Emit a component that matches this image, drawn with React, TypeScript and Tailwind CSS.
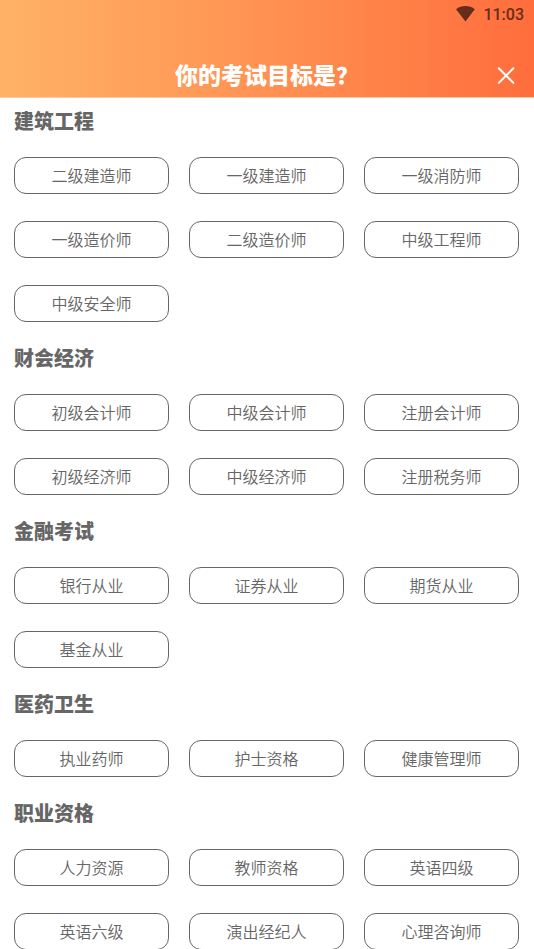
import { useState } from "react";

interface ExamSection {
  title: string;
  exams: string[];
}

const sections: ExamSection[] = [
  {
    title: "建筑工程",
    exams: [
      "二级建造师",
      "一级建造师",
      "一级消防师",
      "一级造价师",
      "二级造价师",
      "中级工程师",
      "中级安全师",
    ],
  },
  {
    title: "财会经济",
    exams: [
      "初级会计师",
      "中级会计师",
      "注册会计师",
      "初级经济师",
      "中级经济师",
      "注册税务师",
    ],
  },
  {
    title: "金融考试",
    exams: ["银行从业", "证券从业", "期货从业", "基金从业"],
  },
  {
    title: "医药卫生",
    exams: ["执业药师", "护士资格", "健康管理师"],
  },
  {
    title: "职业资格",
    exams: [
      "人力资源",
      "教师资格",
      "英语四级",
      "英语六级",
      "演出经纪人",
      "心理咨询师",
    ],
  },
];

const StatusBar = () => (
  <div className="flex h-7 items-center justify-end gap-2 pr-2.5 text-[#652d1a]">
    <svg width="20" height="18" viewBox="0 0 20 18" fill="currentColor">
      <path d="M10.500 16.600 1 4.200C3.700 2 6.900.9 10.500.9s6.600 1.100 9.300 3.300z" />
    </svg>
    <span className="pt-px font-[Roboto] text-base font-medium">11:03</span>
  </div>
);

const App = () => {
  const [selected, setSelected] = useState<string | null>(null);

  return (
    <div className="h-screen overflow-hidden bg-white font-['Noto_Sans_CJK_SC',sans-serif] text-[#666]">
      <header className="border-b border-[#ffc8a6] bg-linear-to-r from-[#ffb266] to-[#ff6d3d]">
        <StatusBar />
        <div className="grid h-[69px] grid-cols-[1fr_auto_1fr] items-end px-3.5 pb-2">
          <h1 className="col-start-2 pb-px text-[23px] leading-7 font-black text-white">
            你的考试目标是？
          </h1>
          <button
            type="button"
            aria-label="关闭"
            className="flex size-7 items-center justify-center justify-self-end text-white"
          >
            <svg
              width="18"
              height="18"
              viewBox="0 0 18 18"
              fill="none"
              stroke="currentColor"
              strokeWidth="2"
              strokeLinecap="round"
            >
              <path d="M1.800 2.300l14.600 14.600M16.400 2.300L1.800 16.900" />
            </svg>
          </button>
        </div>
      </header>

      <main className="flex flex-col gap-[21px] pt-2 pr-[15px] pl-3.5">
        {sections.map((section) => (
          <section key={section.title}>
            <h2 className="mb-[21px] text-xl leading-[30px] font-black">
              {section.title}
            </h2>
            <div className="grid grid-cols-3 gap-x-5 gap-y-[27px]">
              {section.exams.map((exam) => (
                <button
                  key={exam}
                  type="button"
                  aria-pressed={selected === exam}
                  onClick={() => setSelected(exam)}
                  className="h-[37px] rounded-xl border border-[#666] pb-px text-base font-[350]"
                >
                  {exam}
                </button>
              ))}
            </div>
          </section>
        ))}
      </main>
    </div>
  );
};

export default App;
